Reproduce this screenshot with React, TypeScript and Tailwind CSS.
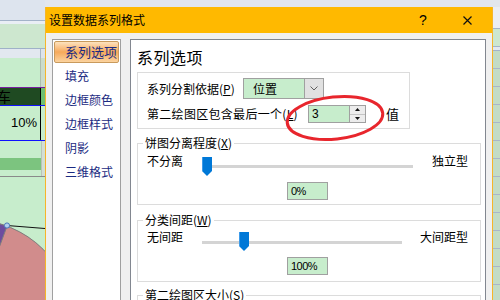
import React from "react";

const NAV = ["系列选项", "填充", "边框颜色", "边框样式", "阴影", "三维格式"];

function Thumb() {
  return (
    <svg width="10" height="19" viewBox="0 0 10 19">
      <polygon points="0,0 10,0 10,14 5,19 0,14" fill="#0078d7" />
      <line x1="0.5" y1="0" x2="0.5" y2="14" stroke="#3d9be9" />
    </svg>
  );
}

function Slider({ width, trackTop, thumbTop, thumbLeft }: { width: string; trackTop: string; thumbTop: string; thumbLeft: string }) {
  return (
    <div className={`relative h-full ${width}`}>
      <div className={`absolute left-0 right-0 h-[3px] bg-[#d4d4d4] ${trackTop}`} />
      <div className={`absolute ${thumbTop} ${thumbLeft}`}>
        <Thumb />
      </div>
    </div>
  );
}

function ValueBox({ value }: { value: string }) {
  return (
    <div className="ml-[149px] h-[18px] w-[41px] border border-[#a0a0a0] bg-[#c7edcc] pl-[3px] font-['Liberation_Sans',sans-serif] text-[11px] leading-[16px] tracking-[-0.5px] text-black">
      {value}
    </div>
  );
}

function Legend({ children }: { children: React.ReactNode }) {
  return (
    <span className="absolute -top-[9px] left-[5px] bg-white px-[2px] text-[12px] leading-[16px] text-black">
      {children}
    </span>
  );
}

function Backdrop() {
  return (
    <div className="flex w-[45px] shrink-0 flex-col">
      <div className="h-[20px] bg-[#dde4ee]" />
      <div className="h-px bg-[#a3b3c9]" />
      <div className="h-[3px] bg-[#e9eef5]" />
      <div className="h-[24px] bg-[#cde7cf]" />
      <div className="h-px bg-[#9fb1c8]" />
      <div className="flex h-[9px]">
        <div className="w-[41px] border-r border-[#a9b7c6] bg-[#e2e8f0]" />
        <div className="flex-1 bg-[#dde3ea]" />
      </div>
      <div className="flex h-[29px]">
        <div className="w-[41px] border-r border-[#aebdae] bg-[#c7edcc]" />
        <div className="flex-1 bg-[#cbdccc]" />
      </div>
      <div className="h-px bg-[#7b1fa2]" />
      <div className="flex h-[17px]">
        <div className="w-[41px] overflow-hidden border-r border-black bg-[#1f4a22] text-[14px] leading-[17px] text-black">
          <span className="-ml-[3px] block">车</span>
        </div>
        <div className="flex-1 bg-[#6fbf72]" />
      </div>
      <div className="h-px bg-[#1010ff]" />
      <div className="flex h-[34px]">
        <div className="w-[41px] border-r border-black bg-[#c7edcc] pr-[3px] text-right font-['Liberation_Sans',sans-serif] text-[13px] leading-[34px] text-black">
          10%
        </div>
        <div className="flex-1 bg-[#c7edcc]" />
      </div>
      <div className="h-px bg-[#1010ff]" />
      <div className="flex h-[17px]">
        <div className="w-[41px] bg-[#c7edcc]" />
        <div className="flex-1 border-l border-[#b8c4b8] bg-[#d2ded4]" />
      </div>
      <div className="flex h-[12px]">
        <div className="w-[41px] bg-[#7cc47f]" />
        <div className="flex-1 border-l border-[#b8c4b8] bg-[#d2ded4]" />
      </div>
      <div className="flex h-[6px]">
        <div className="w-[41px] bg-[#c7edcc]" />
        <div className="flex-1 border-l border-[#b8c4b8] bg-[#d2ded4]" />
      </div>
      <div className="h-px bg-[#8a8a8a]" />
      <svg width="45" height="123" viewBox="0 177 45 123" className="block bg-[#c7edcc]">
        <circle cx="-27.6" cy="320" r="100" fill="#d18c8c" stroke="#7d7d7d" strokeWidth="1" />
        <path d="M -27.6 320 L 7 226.2 A 100 100 0 0 0 -27.6 220 Z" fill="#6d4c9f" stroke="#7d7d7d" strokeWidth="1" />
        <line x1="7" y1="225.5" x2="45" y2="228.5" stroke="#111" strokeWidth="1" />
        <circle cx="7" cy="225.5" r="2.6" fill="#b2d0f0" stroke="#4a78b8" strokeWidth="1" />
      </svg>
    </div>
  );
}

function RightStrip() {
  return (
    <div className="flex w-[7px] shrink-0 flex-col">
      <div className="h-[7px] bg-[#e2e6ec]" />
      <div className="h-[21px] bg-[#eceef2]" />
      <div className="h-px bg-[#a3b3c9]" />
      <div className="h-[17px] bg-[#cde7cf]" />
      <div className="h-px bg-[#a3b3c9]" />
      <div className="h-[3px] bg-[#e2e8f0]" />
      <div className="h-px bg-[#a3b3c9]" />
      <div className="flex-1 bg-[repeating-linear-gradient(to_bottom,#c3dcc6_0px,#c3dcc6_17px,#a9b6c8_17px,#a9b6c8_18px)]" />
    </div>
  );
}

export default function App() {
  return (
    <div className="relative flex h-[300px] w-[500px] overflow-hidden bg-[#c7edcc] font-['Noto_Sans_CJK_SC',sans-serif] text-black">
      <Backdrop />

      <div className="flex w-[448px] shrink-0 flex-col">
        <div className="h-[7px] bg-[#e2e6ec]" />
        <div className="flex flex-1 flex-col overflow-hidden border-x border-[#f5b52a]">
          {/* title bar */}
          <div className="flex h-[26px] shrink-0 items-center bg-[#ffb900] pl-[3px] pr-[20px]">
            <span className="text-[12px] leading-[16px]">设置数据系列格式</span>
            <span className="ml-auto mr-[35px] w-[10px] text-center font-['Liberation_Sans',sans-serif] text-[14px] leading-[16px]">?</span>
            <svg width="9" height="9" viewBox="0 0 9 9">
              <path d="M0.5 0.5 L8.5 8.5 M8.5 0.5 L0.5 8.5" stroke="#111" strokeWidth="1.2" />
            </svg>
          </div>

          {/* body */}
          <div className="flex flex-1 gap-[9px] overflow-hidden bg-[#f0f0f0] px-[6px] pt-[6px]">
            <div className="h-[300px] w-[69px] shrink-0 border border-[#a0a0a0] bg-white">
              {NAV.map((item, i) => (
                <div key={item} className="h-[24px] p-px">
                  <div
                    className={
                      i === 0
                        ? "flex h-full items-center rounded-[2px] border border-[#c99a5c] bg-gradient-to-b from-[#fde2bd] via-[#f6a95a] to-[#fbd39e] pl-[10px] text-[13px] text-[#1b2b82]"
                        : "flex h-full items-center border border-transparent pl-[10px] text-[12px] text-[#1b2b82]"
                    }
                  >
                    {item}
                  </div>
                </div>
              ))}
            </div>

            <div className="h-[300px] w-[356px] shrink-0 border border-[#828790] bg-white">
              <div className="mt-[7px] pl-[6px] text-[16px] leading-[20px] tracking-[0.5px]">系列选项</div>

              <div className="ml-[6px] mt-[5px] w-[273px] border border-[#dcdcdc] pb-[5px] pt-[5px] text-[12px]">
                <div className="flex h-[21px] items-center">
                  <span className="w-[105px] pl-[9px]">
                    系列分割依据(<u>P</u>)
                  </span>
                  <div className="flex h-[21px] w-[81px] border border-[#a0a0a0]">
                    <div className="flex flex-1 items-center bg-[#c7edcc] pl-[9px]">位置</div>
                    <div className="flex w-[19px] items-center justify-center border-l border-[#a0a0a0] bg-[#e1e1e1]">
                      <svg width="8" height="5" viewBox="0 0 8 5">
                        <path d="M0.5 0.5 L4 4 L7.5 0.5" fill="none" stroke="#606060" strokeWidth="1" />
                      </svg>
                    </div>
                  </div>
                </div>
                <div className="mt-[6px] flex h-[18px] items-center">
                  <span className="w-[170px] pl-[9px] tracking-[0.3px]">
                    第二绘图区包含最后一个(<u>L</u>)
                  </span>
                  <div className="flex h-[18px] w-[58px] border border-[#a0a0a0] bg-[#c7edcc]">
                    <div className="flex-1 pl-[3px] font-['Liberation_Sans',sans-serif] text-[12px] leading-[16px]">3</div>
                    <div className="flex w-[16px] flex-col border-l border-[#a0a0a0] bg-[#ececec]">
                      <div className="flex flex-1 items-center justify-center border-b border-[#c4c4c4]">
                        <svg width="5" height="3" viewBox="0 0 5 3">
                          <polygon points="2.5,0 5,3 0,3" fill="#111" />
                        </svg>
                      </div>
                      <div className="flex flex-1 items-center justify-center">
                        <svg width="5" height="3" viewBox="0 0 5 3">
                          <polygon points="0,0 5,0 2.5,3" fill="#111" />
                        </svg>
                      </div>
                    </div>
                  </div>
                  <span className="ml-[20px] text-[13px]">值</span>
                </div>
              </div>

              <div className="relative ml-[6px] mt-[14px] w-[344px] border border-[#dcdcdc] pb-[4px] pt-[7px] text-[12px]">
                <Legend>
                  饼图分离程度(<u>X</u>)
                </Legend>
                <div className="flex h-[26px]">
                  <span className="w-[64px] pl-[9px] pt-[2px] leading-[16px]">不分离</span>
                  <Slider width="w-[211px]" trackTop="top-[14px]" thumbTop="top-[6px]" thumbLeft="left-0" />
                  <span className="ml-[19px] pt-[2px] leading-[16px]">独立型</span>
                </div>
                <div className="mt-[5px]">
                  <ValueBox value="0%" />
                </div>
              </div>

              <div className="relative ml-[6px] mt-[15px] w-[344px] border border-[#dcdcdc] pb-[6px] pt-[7px] text-[12px]">
                <Legend>
                  分类间距(<u>W</u>)
                </Legend>
                <div className="flex h-[26px]">
                  <span className="w-[64px] pl-[9px] pt-[1px] leading-[16px]">无间距</span>
                  <Slider width="w-[200px]" trackTop="top-[13px]" thumbTop="top-[4px]" thumbLeft="left-[37px]" />
                  <span className="ml-[18px] pt-[1px] leading-[16px]">大间距型</span>
                </div>
                <div className="mt-[3px]">
                  <ValueBox value="100%" />
                </div>
              </div>

              <div className="relative ml-[6px] mt-[13px] h-[40px] w-[344px] border border-[#dcdcdc] text-[12px]">
                <Legend>
                  第二绘图区大小(<u>S</u>)
                </Legend>
              </div>
            </div>
          </div>
        </div>
      </div>

      <RightStrip />

      {/* red annotation ring drawn over the dialog */}
      <svg className="pointer-events-none absolute left-[283px] top-[93px]" width="104" height="50" viewBox="0 0 104 50">
        <ellipse cx="52" cy="25" rx="48" ry="21" transform="rotate(-6 52 25)" fill="none" stroke="#e8262d" strokeWidth="3" />
      </svg>
    </div>
  );
}
